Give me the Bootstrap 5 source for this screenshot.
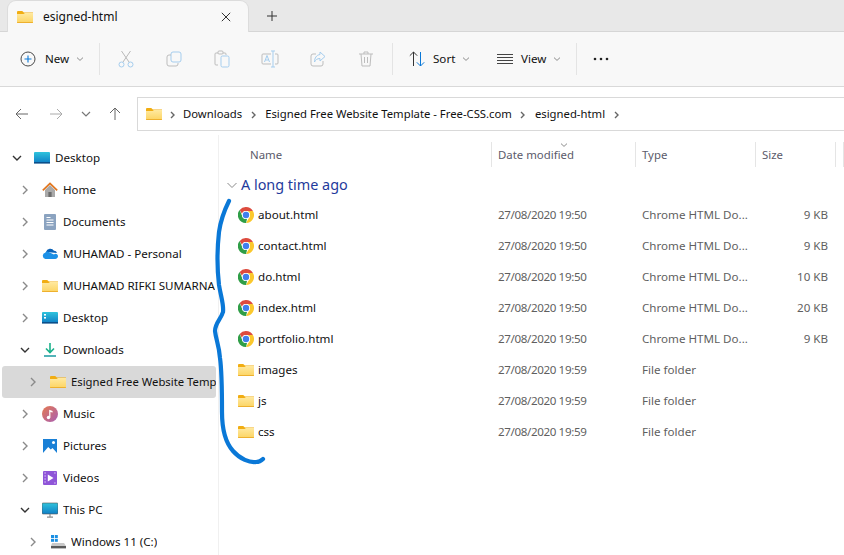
<!DOCTYPE html>
<html>
  <head>
    <title>esigned-html</title>
    <link rel="stylesheet" href="https://cdn.jsdelivr.net/npm/bootstrap@5.3.3/dist/css/bootstrap.min.css" />
    <style>
      html, body { height: 555px; overflow: hidden; }
      body { font-family: "Noto Sans", "Open Sans", sans-serif; font-size: 11.6px; color: #111; background: #fff; }
      .shell { position: relative; width: 844px; height: 555px; overflow: hidden; }
      .tabbar { height: 32px; background: #e8e8e8; border-bottom: 1px solid #d6d6d6; padding-top: 1px; }
      .tab-item { width: 240px; height: 31px; margin-left: 8px; padding: 0 17px 0 9px; background: #f8f8f8; border-radius: 8px 8px 0 0; box-shadow: 0 0 0 1px #dcdcdc; clip-path: inset(-2px -2px 0 -2px); }
      .tab-title { margin-left: 10px; font-size: 12px; }
      .tab-plus { width: 48px; }
      .toolstrip { height: 55px; background: #f8f8f8; border-bottom: 1px solid #d9d9d9; }
      .tool-new { width: 99px; padding-left: 20px; }
      .tool-label { margin-left: 9px; }
      .tool-group { margin: 0 2px; }
      .tool-btn { width: 48px; }
      .tool-sep { width: 1px; height: 32px; background: #e4e4e4; }
      .tool-sort { width: 93px; padding-left: 16px; }
      .tool-view { width: 90px; padding-left: 11px; }
      .tool-dots { padding-left: 16px; }
      .chev-sm { margin-left: 7px; }
      .navrow { height: 48px; padding-top: 10px; }
      .nav-arrows { width: 137px; }
      .nav-slot { height: 33px; }
      .slot-back { width: 49px; padding-left: 15px; }
      .slot-fwd { width: 32px; }
      .slot-down { width: 28px; }
      .addressbox { flex: 1; height: 34px; border: 1px solid #d9d9d9; border-right: 0; padding-left: 8px; font-size: 11.3px; }
      .crumb-sep { width: 23px; text-align: center; }
      .crumb-first { width: 21px; }
      .workarea { height: 420px; }
      .sidepane { width: 219px; padding-top: 7px; border-right: 1px solid #f0f0f0; }
      .side-row { height: 32px; width: 214px; margin-left: 2px; border-radius: 3px; white-space: nowrap; overflow: hidden; }
      .side-row.is-active { background: #d9d9d9; font-size: 11.3px; }
      .side-chev { width: 10px; margin-right: 12px; flex-shrink: 0; }
      .side-label { margin-left: 5px; min-width: 0; overflow: hidden; }
      .filepane { flex: 1; padding-top: 7px; }
      .cols { display: grid; grid-template-columns: 273px 144px 120px 80px 1fr; }
      .colhead { height: 25px; color: #5b5b6b; position: relative; font-size: 11.4px; }
      .colhead > div { padding-left: 6px; border-right: 1px solid #e5e5e5; height: 25px; line-height: 25px; }
      .colhead > div:first-child { padding-left: 31px; }
      .colhead > div:last-child { border: 0; }
      .sort-mark { position: absolute; left: 341px; top: -1px; }
      .grouphead { height: 32px; padding-left: 8px; color: #1f3a9c; font-size: 14.4px; padding-top: 4px; }
      .grouphead svg { margin-right: 4px; }
      .filerow { height: 31px; line-height: 31px; color: #5f5f5f; }
      .filerow > div { padding-left: 6px; white-space: nowrap; }
      .filerow .fname { padding-left: 19px; color: #111; }
      .filerow .fname svg { margin-right: 4px; vertical-align: -4px; }
      .filerow .fdate { letter-spacing: -0.37px; }
      .filerow .fsize { padding: 0 8px 0 0; text-align: right; }
      .ink { position: absolute; left: 0; top: 0; pointer-events: none; }
    </style>
  </head>

  <body>
    <svg width="0" height="0" class="d-block position-absolute">
      <defs>
        <linearGradient id="fg" x1="0" y1="0" x2="0" y2="1"><stop offset="0" stop-color="#ffe9a0" /><stop offset="1" stop-color="#fcd462" /></linearGradient>
        <linearGradient id="sg" x1="0" y1="0" x2="0" y2="1"><stop offset="0" stop-color="#2fc3dc" /><stop offset="1" stop-color="#0f7fc6" /></linearGradient>
        <linearGradient id="mg" x1="0" y1="0" x2="1" y2="1"><stop offset="0" stop-color="#e5794f" /><stop offset="1" stop-color="#a85fb5" /></linearGradient>
        <symbol id="i-folder" viewBox="0 0 16 16">
          <path d="M0 3.200C0 2.500.5 2 1.200 2h4l1.700 1.500H16V14H0z" fill="#f1ad12" />
          <path d="M0 5h6.600L8 4h8v9.200c0 .5-.4.8-.8.8H.8c-.4 0-.8-.3-.8-.8z" fill="url(#fg)" />
          <path d="M0 13h16v.3c0 .4-.4.7-.8.7H.8c-.4 0-.8-.3-.8-.7z" fill="#eeb02e" />
        </symbol>
        <symbol id="i-chrome" viewBox="0 0 16 16">
          <path d="M8 0a8 8 0 0 1 6.930 4H8a4 4 0 0 0-3.900 3L1.700 2.900A8 8 0 0 1 8 0z" fill="#dd4b3e" />
          <path d="M14.930 4A8 8 0 0 1 8 16l3.460-6A4 4 0 0 0 11.460 6 4 4 0 0 0 8 4z" fill="#fbc82d" />
          <path d="M8 16A8 8 0 0 1 1.700 2.900L4.540 10A4 4 0 0 0 9 11.900z" fill="#2f9e47" />
          <circle cx="8" cy="8" r="4" fill="#fff" />
          <circle cx="8" cy="8" r="3.200" fill="#3f7fee" />
        </symbol>
        <symbol id="i-chev-r" viewBox="0 0 10 10"><path d="M3 1l4 4-4 4" fill="none" stroke="#8a8a8a" stroke-width="1.400" /></symbol>
        <symbol id="i-chev-d" viewBox="0 0 10 10"><path d="M1 3l4 4 4-4" fill="none" stroke="#333" stroke-width="1.400" /></symbol>
        <symbol id="i-chev-n" viewBox="0 0 10 10"><path d="M1 3l4 4 4-4" fill="none" stroke="#777" stroke-width="1.200" /></symbol>
        <symbol id="i-chev-tiny" viewBox="0 0 8 8"><path d="M1 2.600l3 2.800 3-2.800" fill="none" stroke="#8d8d8d" stroke-width="1" /></symbol>
        <symbol id="i-crumb" viewBox="0 0 8 10"><path d="M2 2l3 3-3 3" fill="none" stroke="#666" stroke-width="1.400" /></symbol>
        <symbol id="i-desk" viewBox="0 0 16 16"><rect y="2" width="16" height="11" rx="1" fill="url(#sg)" /><rect y="12" width="16" height="1.600" fill="#0b4f8a" /></symbol>
        <symbol id="i-desk2" viewBox="0 0 16 16"><rect y="2" width="16" height="11" rx="1" fill="url(#sg)" /><rect y="12" width="16" height="1.600" fill="#0b4f8a" /><rect x="2" y="4" width="2" height="1.600" fill="#fff" /><rect x="2" y="7" width="2" height="1.600" fill="#fff" /></symbol>
        <symbol id="i-home" viewBox="0 0 16 16"><path d="M3 8l5-5 5 5v7H3z" fill="#a9a9a9" /><rect x="6.400" y="10" width="3.200" height="5" fill="#6d6d6d" /><path d="M.8 8.400L8 1.500l7.200 6.900" fill="none" stroke="#e2751c" stroke-width="1.700" /></symbol>
        <symbol id="i-docs" viewBox="0 0 16 16"><rect x="2" y="0" width="12" height="16" rx="1" fill="#8ba3c0" /><path d="M4.500 3.500h4M4.500 6h7M4.500 8.500h7M4.500 11h7" stroke="#fff" stroke-width="1" /></symbol>
        <symbol id="i-cloud" viewBox="0 0 16 16"><path d="M4 6a4.400 4.400 0 0 1 8-1.200A3 3 0 0 1 15 7z" fill="#0a62b8" /><path d="M3.400 13a3.200 3.200 0 0 1-.3-6.200 3 3 0 0 1 4-.6L12 8.500a2.400 2.400 0 0 1 4 1.600c0 1.600-1.200 2.900-2.800 2.900z" fill="#1c90e6" /></symbol>
        <symbol id="i-dl" viewBox="0 0 16 16"><path d="M8 1v9M4 6.500L8 10.500l4-4" fill="none" stroke="#1bb18b" stroke-width="1.600" /><path d="M2 14h12" stroke="#1a9aa0" stroke-width="1.600" /></symbol>
        <symbol id="i-music" viewBox="0 0 16 16"><circle cx="8" cy="8" r="8" fill="url(#mg)" /><path d="M7.200 11.500V3.800l3.400 1.200v1.600L8.400 6v5.500z" fill="#fff" /><circle cx="6.500" cy="11.500" r="1.700" fill="#fff" /></symbol>
        <symbol id="i-pics" viewBox="0 0 16 16"><rect x="1" y="1" width="14" height="14" fill="#1a80d6" /><path d="M1 15l5.200-6 2.600 2.600L10.500 10 15 15z" fill="#fff" /><circle cx="11.500" cy="4.500" r="1.500" fill="#fff" /></symbol>
        <symbol id="i-vid" viewBox="0 0 16 16"><rect x="1" y="1" width="14" height="14" rx="1" fill="#8f55d8" /><path d="M5.800 4.500L11.500 8l-5.700 3.500z" fill="#fff" /><path d="M2.400 3h1.400M2.400 6h1.400M2.400 9h1.400M2.400 12h1.400M12.200 3h1.400M12.200 13h1.400" stroke="#e5d5fa" stroke-width="1.200" /></symbol>
        <symbol id="i-pc" viewBox="0 0 16 16"><rect y="1" width="16" height="11" rx="1" fill="url(#sg)" stroke="#555" stroke-width=".6" /><path d="M8 12v3M5 15.200h6" stroke="#8c8c8c" stroke-width="1.200" /></symbol>
        <symbol id="i-drive" viewBox="0 0 16 16"><rect x="1" y="1" width="3" height="3" fill="#1a8fe3" /><rect x="4.800" y="1" width="3" height="3" fill="#1a8fe3" /><rect x="1" y="4.800" width="3" height="3" fill="#1a8fe3" /><rect x="4.800" y="4.800" width="3" height="3" fill="#1a8fe3" /><path d="M2 9h12l2 3v2H1v-2z" fill="#c9c9c9" /><rect x="1" y="12" width="15" height="2.400" fill="#5a5a5a" /></symbol>
      </defs>
    </svg>

    <div class="shell">
      <div class="tabbar d-flex">
        <div class="tab-item d-flex align-items-center">
          <svg width="16" height="16"><use href="#i-folder" /></svg>
          <span class="tab-title flex-grow-1">esigned-html</span>
          <svg width="10" height="10" viewBox="0 0 10 10"><path d="M.8.8l8.400 8.400M9.200.8L.8 9.200" stroke="#333" stroke-width="1" fill="none" /></svg>
        </div>
        <div class="tab-plus d-flex align-items-center justify-content-center">
          <svg width="10" height="10" viewBox="0 0 10 10"><path d="M5 0v10M0 5h10" stroke="#333" stroke-width="1" /></svg>
        </div>
      </div>

      <div class="toolstrip d-flex align-items-center">
        <div class="tool-new d-flex align-items-center">
          <svg width="16" height="16" viewBox="0 0 16 16"><circle cx="8" cy="8" r="7" fill="none" stroke="#4a4a4a" stroke-width="1" /><path d="M8 4.500v7M4.500 8h7" stroke="#0a78d7" stroke-width="1.100" /></svg>
          <span class="tool-label">New</span>
          <svg class="chev-sm" width="8" height="8"><use href="#i-chev-tiny" /></svg>
        </div>
        <div class="tool-sep"></div>
        <div class="tool-group d-flex">
          <div class="tool-btn text-center"><svg width="16" height="18" viewBox="0 0 16 18"><path d="M3.500 1l7.500 11M12.500 1L5 12" stroke="#b9b9b9" fill="none" /><circle cx="3.500" cy="14.500" r="2.500" fill="none" stroke="#a5cdee" /><circle cx="12.500" cy="14.500" r="2.500" fill="none" stroke="#a5cdee" /></svg></div>
          <div class="tool-btn text-center"><svg width="16" height="16" viewBox="0 0 16 16"><rect x="5" y="1" width="10" height="10" rx="2" fill="none" stroke="#a5cdee" /><path d="M5 4H3a2 2 0 0 0-2 2v7a2 2 0 0 0 2 2h7a2 2 0 0 0 2-2v-1" fill="none" stroke="#bdbdbd" /></svg></div>
          <div class="tool-btn text-center"><svg width="16" height="18" viewBox="0 0 16 18"><path d="M4 15H2a1 1 0 0 1-1-1V4a1 1 0 0 1 1-1h9a1 1 0 0 1 1 1v1" fill="none" stroke="#bdbdbd" /><rect x="4" y="1" width="5" height="3" rx="1" fill="#f8f8f8" stroke="#bdbdbd" /><rect x="7" y="6" width="8" height="11" rx="1.500" fill="none" stroke="#a5cdee" /></svg></div>
          <div class="tool-btn text-center"><svg width="18" height="18" viewBox="0 0 18 18"><path d="M10 4H2a1 1 0 0 0-1 1v8a1 1 0 0 0 1 1h8M14 4h2a1 1 0 0 1 1 1v8a1 1 0 0 1-1 1h-2" fill="none" stroke="#bdbdbd" /><path d="M12 1v16M10 1h4M10 17h4" stroke="#a5cdee" fill="none" /><path d="M3.500 12l2.500-6.500L8.500 12M4.500 10h3" stroke="#a5cdee" fill="none" /></svg></div>
          <div class="tool-btn text-center"><svg width="16" height="16" viewBox="0 0 16 16"><path d="M6 3H3a2 2 0 0 0-2 2v8a2 2 0 0 0 2 2h8a2 2 0 0 0 2-2v-3" fill="none" stroke="#bdbdbd" /><path d="M10 1l5 4.500-5 4.500V7.500C7 7.500 5.500 9 4.500 11c0-4 2-7 5.500-7.500z" fill="none" stroke="#a5cdee" /></svg></div>
          <div class="tool-btn text-center"><svg width="14" height="16" viewBox="0 0 14 16"><path d="M0 3h14M5 3V1h4v2M2 3l1 12h8l1-12M5.500 6v6M8.500 6v6" fill="none" stroke="#bdbdbd" /></svg></div>
        </div>
        <div class="tool-sep"></div>
        <div class="tool-sort d-flex align-items-center">
          <svg width="16" height="16" viewBox="0 0 16 16"><path d="M4.500 15V1M.8 4.700L4.500 1l3.700 3.700" fill="none" stroke="#333" /><path d="M11.500 1v14M7.800 11.300l3.700 3.700 3.700-3.700" fill="none" stroke="#0a78d7" /></svg>
          <span class="ms-2">Sort</span>
          <svg class="chev-sm" width="8" height="8"><use href="#i-chev-tiny" /></svg>
        </div>
        <div class="tool-view d-flex align-items-center">
          <svg width="16" height="12" viewBox="0 0 16 12"><path d="M0 1.500h16M0 4.500h16M0 7.500h16M0 10.500h16" stroke="#444" stroke-width="1" /></svg>
          <span class="ms-2">View</span>
          <svg class="chev-sm" width="8" height="8"><use href="#i-chev-tiny" /></svg>
        </div>
        <div class="tool-sep"></div>
        <div class="tool-dots d-flex">
          <svg width="16" height="4" viewBox="0 0 16 4"><circle cx="2" cy="2" r="1.300" fill="#222" /><circle cx="8" cy="2" r="1.300" fill="#222" /><circle cx="14" cy="2" r="1.300" fill="#222" /></svg>
        </div>
      </div>

      <div class="navrow d-flex">
        <div class="nav-arrows d-flex">
          <div class="nav-slot slot-back d-flex align-items-center"><svg width="14" height="12" viewBox="0 0 14 12"><path d="M13 6H1M6 1L1 6l5 5" fill="none" stroke="#666" /></svg></div>
          <div class="nav-slot slot-fwd d-flex align-items-center"><svg width="14" height="12" viewBox="0 0 14 12"><path d="M1 6h12M8 1l5 5-5 5" fill="none" stroke="#aaa" /></svg></div>
          <div class="nav-slot slot-down d-flex align-items-center"><svg width="10" height="10"><use href="#i-chev-n" /></svg></div>
          <div class="nav-slot d-flex align-items-center"><svg width="12" height="14" viewBox="0 0 12 14"><path d="M6 13V1M1 6l5-5 5 5" fill="none" stroke="#666" /></svg></div>
        </div>
        <div class="addressbox d-flex align-items-center">
          <svg width="16" height="16"><use href="#i-folder" /></svg>
          <span class="crumb-sep crumb-first"><svg width="8" height="10"><use href="#i-crumb" /></svg></span>
          <span>Downloads</span>
          <span class="crumb-sep"><svg width="8" height="10"><use href="#i-crumb" /></svg></span>
          <span>Esigned Free Website Template - Free-CSS.com</span>
          <span class="crumb-sep"><svg width="8" height="10"><use href="#i-crumb" /></svg></span>
          <span>esigned-html</span>
          <span class="crumb-sep"><svg width="8" height="10"><use href="#i-crumb" /></svg></span>
        </div>
      </div>

      <div class="workarea d-flex">
        <div class="sidepane" id="sidepane"></div>
        <div class="filepane">
          <div class="colhead cols">
            <div>Name</div>
            <div>Date modified</div>
            <div>Type</div>
            <div>Size</div>
            <div></div>
            <svg class="sort-mark" width="8" height="8"><use href="#i-chev-tiny" /></svg>
          </div>
          <div class="grouphead d-flex align-items-center">
            <svg width="10" height="10" viewBox="0 0 10 10"><path d="M.5 3l4.500 4.500L9.500 3" fill="none" stroke="#8a8a8a" /></svg>
            <span>A long time ago</span>
          </div>
          <div id="filelist"></div>
        </div>
      </div>

      <svg class="ink" width="844" height="555" viewBox="0 0 844 555">
        <path d="M229 201C225 209 221 218 219 232C217 250 217 268 219 285C221 297 224 305 223 312C221 319 215 323 215 331C216 340 219 345 220 358C222 372 222 395 222 412C222 430 225 442 233 451C240 459 250 463 256 462C260 462 262 460 263 459" fill="none" stroke="#0a78d7" stroke-width="4.200" stroke-linecap="round" stroke-linejoin="round" />
      </svg>
    </div>

    <script>
      const sideData = [
        { name: "Desktop", icon: "i-desk", level: 0, open: true },
        { name: "Home", icon: "i-home", level: 1 },
        { name: "Documents", icon: "i-docs", level: 1 },
        { name: "MUHAMAD - Personal", icon: "i-cloud", level: 1 },
        { name: "MUHAMAD RIFKI SUMARNA", icon: "i-folder", level: 1 },
        { name: "Desktop", icon: "i-desk2", level: 1 },
        { name: "Downloads", icon: "i-dl", level: 1, open: true },
        { name: "Esigned Free Website Template - Free-CSS.com", icon: "i-folder", level: 2, active: true },
        { name: "Music", icon: "i-music", level: 1 },
        { name: "Pictures", icon: "i-pics", level: 1 },
        { name: "Videos", icon: "i-vid", level: 1 },
        { name: "This PC", icon: "i-pc", level: 1, open: true },
        { name: "Windows 11 (C:)", icon: "i-drive", level: 2 },
      ];

      const fileData = [
        { name: "about.html", date: "27/08/2020 19:50", type: "Chrome HTML Do...", size: "9 KB", icon: "i-chrome" },
        { name: "contact.html", date: "27/08/2020 19:50", type: "Chrome HTML Do...", size: "9 KB", icon: "i-chrome" },
        { name: "do.html", date: "27/08/2020 19:50", type: "Chrome HTML Do...", size: "10 KB", icon: "i-chrome" },
        { name: "index.html", date: "27/08/2020 19:50", type: "Chrome HTML Do...", size: "20 KB", icon: "i-chrome" },
        { name: "portfolio.html", date: "27/08/2020 19:50", type: "Chrome HTML Do...", size: "9 KB", icon: "i-chrome" },
        { name: "images", date: "27/08/2020 19:59", type: "File folder", size: "", icon: "i-folder" },
        { name: "js", date: "27/08/2020 19:59", type: "File folder", size: "", icon: "i-folder" },
        { name: "css", date: "27/08/2020 19:59", type: "File folder", size: "", icon: "i-folder" },
      ];

      const sidepane = document.querySelector("#sidepane");
      const paddings = [10, 18, 26];
      for (let i = 0; i < sideData.length; i++) {
        const item = sideData[i];
        const row = document.createElement("div");
        row.className = "side-row d-flex align-items-center" + (item.active ? " is-active" : "");
        row.style.paddingLeft = `${paddings[item.level]}px`;
        const chev = item.open ? "i-chev-d" : "i-chev-r";
        row.innerHTML =
          `<svg class="side-chev" width="10" height="10"><use href="#${chev}" /></svg>` +
          `<svg class="flex-shrink-0" width="16" height="16"><use href="#${item.icon}" /></svg>` +
          `<span class="side-label">${item.name}</span>`;
        sidepane.appendChild(row);
      }

      const filelist = document.querySelector("#filelist");
      for (let i = 0; i < fileData.length; i++) {
        const file = fileData[i];
        const row = document.createElement("div");
        row.className = "filerow cols";
        row.innerHTML =
          `<div class="fname"><svg width="16" height="16"><use href="#${file.icon}" /></svg>${file.name}</div>` +
          `<div class="fdate">${file.date}</div><div>${file.type}</div><div class="fsize">${file.size}</div><div></div>`;
        filelist.appendChild(row);
      }
    </script>
    <script src="https://cdn.jsdelivr.net/npm/bootstrap@5.3.3/dist/js/bootstrap.bundle.min.js"></script>
  </body>
</html>
